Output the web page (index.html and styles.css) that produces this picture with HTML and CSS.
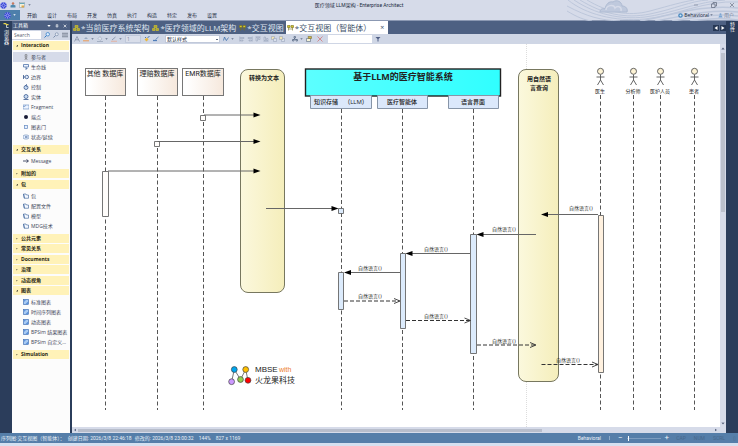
FILE: index.html
```html
<!DOCTYPE html>
<html lang="zh-CN">
<head>
<meta charset="utf-8">
<title>医疗领域 LLM架构 - Enterprise Architect</title>
<link rel="stylesheet" href="styles.css">
</head>
<body>
<svg class="defs" aria-hidden="true">
  <symbol id="logo" viewBox="0 0 12 12"><circle cx="6" cy="6" r="5.4" fill="#3b49d8"/><path d="M6 .6v10.800M.6 6h10.800M2.200 2.200l7.600 7.600M9.800 2.200l-7.600 7.600" stroke="#c9cffa" stroke-width=".9"/><circle cx="6" cy="6" r="1.600" fill="#3b49d8"/></symbol>
  <symbol id="folder" viewBox="0 0 12 12"><path d="M1 2h5l1 2h4v6.500H2.500z" fill="#f4f8ff" stroke="#456a9e" stroke-width="1.300"/><path d="M1 2l2 8.500" stroke="#456a9e" stroke-width="1.600"/></symbol>
  <symbol id="chart" viewBox="0 0 12 12"><rect x="1" y="1" width="10" height="10" fill="#5c93dc" stroke="#2f5fa5"/><path d="M2 6l4-4h4v3L5 10H2z" fill="#a9cbf3"/></symbol>
  <symbol id="seq" viewBox="0 0 14 12"><path d="M1 1h5v4H1zM8 1h5v4H8zM3 5v6M11 5v6M3 8h8" fill="#d6c72c" stroke="#77701f" stroke-width="1.200"/></symbol>
  <symbol id="cls" viewBox="0 0 14 12"><path d="M4 1h6v4H4zM1 7h5v4H1zM8 7h5v4H8z" fill="#a9a432" stroke="#d6c72c" stroke-width="1.200"/></symbol>
  <symbol id="align" viewBox="0 0 12 12"><path d="M1.500 1v10M3 3h7v2H3zM3 8h5v2H3z" fill="none" stroke="#8f9bb2"/></symbol>
  <symbol id="down" viewBox="0 0 6 4"><path d="M.5.500h5L3 3.500z" fill="currentColor"/></symbol>
</svg>

<header class="top">
  <svg class="swirl" viewBox="566 0 172 21" preserveAspectRatio="xMaxYMin slice" aria-hidden="true">
    <g fill="none" stroke="#bdc7db"><path d="M568 0C585 14 615 22 645 19S705 0 738 2M574 0C595 14 620 20 645 17S700 1 725 0M580 0C603 14 625 19 650 14S690 1 708 0M587 0C607 12 628 17 650 11S682 2 694 0M567 6C588 17 600 20 620 21M567 11C577 17 584 20 592 21"/><path d="M640 21C670 16 700 4 738 8M655 21C680 17 705 9 738 12M672 21C694 18 712 13 738 16M690 21C710 19 720 17 738 20" stroke-width="1.500"/></g>
    <path d="M600 12c0-3 3-4 5-3c1-5 4-8 8-7c4-3 9 0 9 4c4 0 6 3 5 6z" fill="#bfc9dd" stroke="#aebbd2"/><path d="M606 10c0-5 8-6 9-2c3-3 7-1 6 3" fill="none" stroke="#d6dbe9" stroke-width="1.500"/>
  </svg>
  <div class="titlebar">
    <div class="quick">
      <svg class="logo" viewBox="0 0 12 12"><use href="#logo"/></svg>
      <svg class="ic" viewBox="0 0 12 12"><circle cx="6" cy="3" r="2.500" fill="#c9795d"/><path d="M1 7l5-2 5 2v4H1z" fill="#4f8aae"/></svg>
      <svg class="ic" viewBox="0 0 12 12"><rect x="1" y="1" width="10" height="10" fill="#f3f1df" stroke="#8496a7"/><path d="M1 3h10" stroke="#67a7b9" stroke-width="2"/><path d="M5 7h5v4H5z" fill="#dda64b"/></svg>
      <svg class="caret" viewBox="0 0 6 4"><use href="#down"/></svg>
    </div>
    <h1>医疗领域 LLM架构 - Enterprise Architect</h1>
    <div class="winbtns">
      <button aria-label="最小化"><svg viewBox="0 0 12 12"><path d="M2 6h8" stroke="#5d6678"/></svg></button>
      <button aria-label="还原"><svg viewBox="0 0 12 12"><path d="M1 4h7v7H1zM4 4V1h7v7H8" fill="none" stroke="#5d6678" stroke-width="1.400"/></svg></button>
      <button aria-label="关闭"><svg viewBox="0 0 12 12"><path d="M2 2l8 8M10 2l-8 8" stroke="#5d6678" stroke-width="1.200"/></svg></button>
    </div>
  </div>
  <div class="menubar">
    <button class="file" aria-label="文件"><svg class="logo" viewBox="0 0 12 12"><use href="#logo"/></svg><svg class="caret" viewBox="0 0 6 4"><use href="#down"/></svg></button>
    <nav class="menu"><button>开始</button><button>设计</button><button>布局</button><button>开发</button><button>仿真</button><button>执行</button><button>构造</button><button>特定</button><button>发布</button><button>设置</button></nav>
    <div class="account">
      <button><svg class="ic5" viewBox="0 0 12 12"><circle cx="6" cy="6" r="4" fill="#cfe6f5" stroke="#4586bd" stroke-width="3"/></svg>Behavioral<svg class="caret" viewBox="0 0 6 4"><use href="#down"/></svg></button>
      <button class="muted"><svg class="ic5" viewBox="0 0 12 12"><circle cx="6" cy="3" r="2.500" fill="#7ba6d4"/><path d="M1 11l2-5h6l2 5z" fill="#7ba6d4"/></svg>用户</button>
    </div>
  </div>
</header>

<div class="work">
  <aside class="rail">
    <svg class="railicon" viewBox="0 0 12 12"><path d="M1 3h4l2 2h4" stroke="#e6d34b" stroke-width="2.500" fill="none"/><path d="M7 6v5h4" stroke="#e8edf6" fill="none" stroke-width="1.500"/></svg>
    <button>浏览器</button>
  </aside>
  <aside class="toolbox">
    <div class="boxhead"><h2>工具箱</h2>
      <button aria-label="选项"><svg viewBox="0 0 6 4"><use href="#down"/></svg></button>
      <button aria-label="固定"><svg viewBox="0 0 6 8"><path d="M1.500 1h3v3h-3zM0 4.500h6M3 4v4" fill="none" stroke="currentColor"/></svg></button>
      <button aria-label="关闭"><svg viewBox="0 0 6 6"><path d="M1 1l4 4M5 1L1 5" stroke="currentColor"/></svg></button>
    </div>
    <div class="search">
      <input type="text" placeholder="Search" aria-label="Search">
      <button aria-label="搜索"><svg viewBox="0 0 12 12"><circle cx="7.500" cy="4.500" r="3.500" fill="#dceeff" stroke="#2f78c4" stroke-width="1.400"/><path d="M5 7l-4 4" stroke="#2f78c4" stroke-width="2"/></svg></button>
      <button aria-label="查找工具"><svg viewBox="0 0 12 12"><circle cx="7.500" cy="4.500" r="3" fill="#e6ebf3" stroke="#778aa8" stroke-width="1.300"/><path d="M5 7l-4 4" stroke="#778aa8" stroke-width="2"/></svg></button>
      <button aria-label="菜单"><svg viewBox="0 0 12 12"><path d="M0 2.500h12M0 6h12M0 9.500h12" stroke="#7e8797" stroke-width="2"/></svg></button>
    </div>
    <div class="tree">
      <section class="group open"><h3><button>Interaction</button></h3><ul>
        <li class="on"><svg viewBox="0 0 12 12"><circle cx="6" cy="2.500" r="2" fill="none" stroke="#555"/><path d="M6 5v4M3 6h6M6 8l-2.500 4M6 8l2.500 4" stroke="#555" fill="none"/></svg><button>参与者</button></li>
        <li><svg viewBox="0 0 12 12"><path d="M1 1h10v5H1zM6 6v6M6 9h3" fill="#eef4ff" stroke="#3c64a0" stroke-width="1.400"/></svg><button>生命线</button></li>
        <li><svg viewBox="0 0 12 12"><path d="M1 2v8M1 6h3" stroke="#33548c" stroke-width="1.600"/><circle cx="7.500" cy="6" r="3.500" fill="#dfe9f8" stroke="#33548c" stroke-width="1.500"/></svg><button>边界</button></li>
        <li><svg viewBox="0 0 12 12"><circle cx="6" cy="7" r="4" fill="#c9dbf2" stroke="#33548c" stroke-width="1.500"/><path d="M8 0L5 3l3 2" stroke="#33548c" fill="none" stroke-width="1.300"/></svg><button>控制</button></li>
        <li><svg viewBox="0 0 12 12"><circle cx="6" cy="5" r="4" fill="#c9dbf2" stroke="#33548c" stroke-width="1.500"/><path d="M1 11h10" stroke="#33548c" stroke-width="1.600"/></svg><button>实体</button></li>
        <li><svg viewBox="0 0 12 12"><path d="M0 2h12v8H0zM0 5h4l1-3" fill="#edf4ff" stroke="#5f88c0" stroke-width="1.200"/></svg><button>Fragment</button></li>
        <li><svg viewBox="0 0 12 12"><circle cx="6" cy="6" r="4" fill="#171a35"/></svg><button>端点</button></li>
        <li><svg viewBox="0 0 12 12"><rect x="3" y="3" width="6" height="6" fill="#e6f0ff" stroke="#6b8fc4" stroke-width="1.500"/></svg><button>图表门</button></li>
        <li><svg viewBox="0 0 12 12"><rect x="0" y="2" width="12" height="8" rx="4" fill="#e6f0ff" stroke="#6686b4" stroke-width="1.200"/><path d="M4 6h5" stroke="#33548c" stroke-width="2"/></svg><button>状态/延续</button></li>
      </ul></section>
      <section class="group open"><h3><button>交互关系</button></h3><ul>
        <li><svg viewBox="0 0 12 12"><path d="M0 6h10M7 3l4 3-4 3" fill="none" stroke="#222b4a" stroke-width="1.600"/></svg><button>Message</button></li>
      </ul></section>
      <section class="group roomy"><h3><button>附加的</button></h3></section>
      <section class="group open"><h3><button>包</button></h3><ul>
        <li><svg viewBox="0 0 12 12"><use href="#folder"/></svg><button>包</button></li>
        <li><svg viewBox="0 0 12 12"><use href="#folder"/></svg><button>配置文件</button></li>
        <li><svg viewBox="0 0 12 12"><use href="#folder"/></svg><button>模型</button></li>
        <li><svg viewBox="0 0 12 12"><use href="#folder"/></svg><button>MDG技术</button></li>
      </ul></section>
      <section class="group"><h3><button>公共元素</button></h3></section>
      <section class="group roomy"><h3><button>常见关系</button></h3></section>
      <section class="group"><h3><button>Documents</button></h3></section>
      <section class="group roomy"><h3><button>治理</button></h3></section>
      <section class="group"><h3><button>动态视角</button></h3></section>
      <section class="group open"><h3><button>图表</button></h3><ul>
        <li><svg viewBox="0 0 12 12"><use href="#chart"/></svg><button>标准图表</button></li>
        <li><svg viewBox="0 0 12 12"><use href="#chart"/></svg><button>时间序列图表</button></li>
        <li><svg viewBox="0 0 12 12"><use href="#chart"/></svg><button>动态图表</button></li>
        <li><svg viewBox="0 0 12 12"><use href="#chart"/></svg><button>BPSim 结果图表</button></li>
        <li><svg viewBox="0 0 12 12"><use href="#chart"/></svg><button>BPSim 自定义...</button></li>
      </ul></section>
      <section class="group"><h3><button>Simulation</button></h3></section>
    </div>
  </aside>

  <main class="main">
    <div class="tabs">
      <button class="tab"><svg viewBox="0 0 14 12"><use href="#cls"/></svg>*当前医疗系统架构</button>
      <button class="tab"><svg viewBox="0 0 14 12"><use href="#cls"/></svg>*医疗领域的LLM架构</button>
      <button class="tab"><svg viewBox="0 0 14 12"><use href="#seq"/></svg>*交互视图</button>
      <button class="tab active"><svg viewBox="0 0 14 12"><use href="#seq"/></svg>*交互视图（智能体）<span class="x">×</span></button>
      <div class="tabnav"><button aria-label="上一个"><svg viewBox="0 0 6 6"><path d="M4.500 1v4L1.500 3z" fill="#fff"/></svg></button><button aria-label="下一个"><svg viewBox="0 0 6 6"><path d="M1.500 1v4l3-2z" fill="#fff"/></svg></button></div>
    </div>
    <div class="toolbar">
      <button aria-label="字体"><svg viewBox="0 0 12 12"><path d="M1 11L6 1l5 10M3 7.500h6" fill="none" stroke="#7f8ba0" stroke-width="1.400"/></svg></button>
      <button class="drop" aria-label="填充颜色"><svg viewBox="0 0 12 12"><path d="M2 6l4-4 4 4z" fill="#9aa9c2"/><path d="M0 9.500h12" stroke="#e7a774" stroke-width="2.500"/></svg><svg class="caret" viewBox="0 0 6 4"><use href="#down"/></svg></button>
      <button class="drop" aria-label="字体颜色"><svg viewBox="0 0 12 12"><path d="M2 5l4-4 4 5-4 3z" fill="#dfe4ee" stroke="#8e9bb3"/><path d="M0 11h12" stroke="#a4afc2" stroke-width="2"/></svg><svg class="caret" viewBox="0 0 6 4"><use href="#down"/></svg></button>
      <button class="drop" aria-label="线条颜色"><svg viewBox="0 0 12 12"><path d="M2 8l7-6" stroke="#8e9bb3" stroke-width="2"/><path d="M0 10.500h12" stroke="#e3b3a3" stroke-width="2"/></svg><svg class="caret" viewBox="0 0 6 4"><use href="#down"/></svg></button>
      <input class="num" type="text" value="1" aria-label="线宽">
      <button aria-label="格式刷"><svg viewBox="0 0 12 12"><path d="M1 7l5-4 3 4-4 4z" fill="#eab83e"/><path d="M7 4l4-4M2 2l2 2" stroke="#4976ad" stroke-width="2"/></svg></button>
      <button aria-label="应用格式"><svg viewBox="0 0 12 12"><path d="M5 7l6-5" stroke="#6d91bf" stroke-width="2"/><path d="M0 9h8" stroke="#4f7db8" stroke-width="2.500"/></svg></button>
      <select class="style" aria-label="样式"><option>默认样式</option></select>
      <button class="drop pen" aria-label="画笔"><svg viewBox="0 0 12 12"><path d="M1 9l2-7 3 6M6 10l5-7" fill="none" stroke="#3a6dab" stroke-width="1.500"/></svg><svg class="caret" viewBox="0 0 6 4"><use href="#down"/></svg></button>
      <span class="aligns">
        <button aria-label="左对齐"><svg viewBox="0 0 12 12"><use href="#align"/></svg></button>
        <button aria-label="右对齐"><svg viewBox="0 0 12 12"><path d="M10.500 1v10M2 3h7v2H2zM4 8h5v2H4z" fill="none" stroke="#8f9bb2"/></svg></button>
        <button aria-label="顶对齐"><svg viewBox="0 0 12 12"><path d="M1 1.500h10M2 3h3v7H2zM7 3h3v4H7z" fill="none" stroke="#8f9bb2"/></svg></button>
        <button aria-label="底对齐"><svg viewBox="0 0 12 12"><path d="M1 10.500h10M2 2h3v7H2zM7 5h3v4H7z" fill="none" stroke="#8f9bb2"/></svg></button>
        <button aria-label="置前"><svg viewBox="0 0 12 12"><path d="M1 1h6v6H1z" fill="#f2e6b2" stroke="#8f9bb2"/><path d="M5 5h6v6H5z" fill="#d9e0ec" stroke="#8f9bb2"/></svg></button>
        <button aria-label="置后"><svg viewBox="0 0 12 12"><path d="M5 5h6v6H5z" fill="#d9e0ec" stroke="#8f9bb2"/><path d="M1 1h6v6H1z" fill="#f2e6b2" stroke="#8f9bb2"/></svg></button>
      </span>
      <button class="drop" aria-label="布局"><svg viewBox="0 0 12 12"><path d="M4 1h3v3H4zM1 7h3v3H1zM8 7h3v3H8zM5 4v3h4M3 7l2-2" fill="none" stroke="#4c5c79" stroke-width="1.300"/></svg><svg class="caret" viewBox="0 0 6 4"><use href="#down"/></svg></button>
      <button aria-label="属性"><svg viewBox="0 0 12 12"><path d="M1 5h8v6H1z" fill="#f4f3da" stroke="#3f506d"/><path d="M4 1h7v4H5z" fill="#d6b73d" stroke="#6c6430"/></svg></button>
      <button class="del" aria-label="删除"><svg viewBox="0 0 12 12"><path d="M1 1l10 10M11 1L1 11" stroke="#d27172" stroke-width="1.500"/></svg></button>
      <input class="filter" type="text" aria-label="过滤">
      <button aria-label="应用过滤"><svg viewBox="0 0 12 12"><path d="M1 2h10L7 6v5H5V6z" fill="#4d5c83"/></svg></button>
    </div>
    <div class="view">
      <div class="canvas">
        <svg class="diagram" width="648" height="383" viewBox="72 44 648 383" role="img" aria-label="交互视图（智能体）">
          <defs>
            <linearGradient id="gy"><stop offset="0" stop-color="#fbf8dd"/><stop offset="1" stop-color="#f5eebb"/></linearGradient>
            <linearGradient id="gp"><stop offset=".1" stop-color="#fff"/><stop offset="1" stop-color="#f6e8dc"/></linearGradient>
            <linearGradient id="gc"><stop offset="0" stop-color="#5cffff"/><stop offset="1" stop-color="#30ffff"/></linearGradient>
            <g id="actor" fill="none" stroke="#555" stroke-width=".9"><path d="M0 74.500V80M-4 77H4M0 80l-3 5M0 80l3 5"/><circle cx="0" cy="71.300" r="3" fill="#fdf3d5"/></g>
            <path id="solid" d="M0 0l-7-2.500v5z" fill="#000"/>
            <path id="open" d="M-6-2.500L0 0l-6 2.500" fill="none" stroke="#333" stroke-width=".9"/>
          </defs>
          <path class="page" d="M526.500 44v383"/>
          <path class="life" d="M105.500 96v314M157.500 96v314M203.500 96v314M341.500 109v301M402.500 109v301M473.500 109v301M600.500 95v315M633.500 95v315M660.500 95v315M694.500 95v315"/>
          <g stroke="#777" fill="url(#gp)"><rect x="85.500" y="68.500" width="40" height="27"/><rect x="137.500" y="68.500" width="40" height="27"/><rect x="182.500" y="68.500" width="41" height="27"/></g>
          <g stroke="#77775f" fill="url(#gy)"><rect x="240.500" y="69.500" width="44" height="223" rx="7.500"/><rect x="518.500" y="69.500" width="40" height="312" rx="7.500"/></g>
          <rect x="305.500" y="69" width="195" height="27" fill="url(#gc)" stroke="#222" stroke-width="1.400"/>
          <path d="M310.500 95.500h61v13h-61zM377.500 95.500h50v13h-50zM448.500 95.500h50v13h-50z" fill="#dbe8fb" stroke="#8795a8"/>
          <g stroke="#666" stroke-width=".9"><path d="M200.500 115.500h5v5h-5zM154.500 141.500h5v5h-5zM102.500 171.500h6v45h-6z" fill="#fffdfb"/><path d="M338.500 208.500h5v5h-5zM338.500 272.500h5v37h-5zM400.500 253.500h5v75h-5zM470.500 234.500h6v119h-6z" fill="#dcebfc"/><path d="M598.500 215.500h5v157h-5z" fill="#fff1df"/></g>
          <path class="msg" d="M204 115h50M158 141.500h96M108 171h146M266 208.500h67M598 214.500h-52M536 234.500h-54M470 253.500h-59M400 272.500h-51"/>
          <use href="#solid" x="260.500" y="115"/><use href="#solid" x="260.500" y="141.500"/><use href="#solid" x="260.500" y="171"/><use href="#solid" x="338.500" y="208.500"/>
          <g transform="scale(-1 1)"><use href="#solid" x="-541" y="214.500"/><use href="#solid" x="-476.500" y="234.500"/><use href="#solid" x="-405.500" y="253.500"/><use href="#solid" x="-344" y="272.500"/></g>
          <path class="reply" d="M344 301h55M406 320.500h64M477 345h59M541.500 364.500h56"/>
          <use href="#open" x="400" y="301"/><use href="#open" x="470.500" y="320.500"/><use href="#open" x="536" y="345"/><use href="#open" x="598" y="364.500"/>
          <use href="#actor" x="600.500"/><use href="#actor" x="633.500"/><use href="#actor" x="660.500"/><use href="#actor" x="694.500"/>
          <g class="db"><text x="105" y="76">其他 数据库</text><text x="157" y="76">理赔数据库</text><text x="203" y="76">EMR数据库</text></g>
          <g class="strong"><text x="264" y="80">转换为文本</text><text x="539" y="81">用自然语</text><text x="539" y="90">言查询</text></g>
          <text class="system" x="403" y="80">基于LLM的医疗智能系统</text>
          <g class="part"><text x="326" y="104">知识存储</text><text x="356" y="104">（LLM）</text><text x="402" y="104">医疗智能体</text><text x="473" y="104">语言界面</text></g>
          <g class="small"><text x="600" y="93">医生</text><text x="633" y="93">分析师</text><text x="660" y="93">医护人员</text><text x="694" y="93">患者</text>
          <text x="581" y="210">自然语言()</text><text x="504" y="231">自然语言()</text><text x="436" y="251">自然语言()</text><text x="370" y="270">自然语言()</text><text x="370" y="298">自然语言()</text><text x="436" y="318">自然语言()</text><text x="504" y="343">自然语言()</text><text x="568" y="362">自然语言()</text></g>
          <path d="M234.300 369.500l-2.700 12.200M234.300 369.500l6.200 10 5.200-10 2.300 11" fill="none" stroke="#555" stroke-width=".8"/>
          <g stroke="#444" stroke-width=".7"><circle cx="234.300" cy="369.500" r="2.900" fill="#00a6ef"/><circle cx="245.700" cy="369.500" r="2.900" fill="#ffc000"/><circle cx="231.600" cy="381.700" r="2.900" fill="#cc99ff"/><circle cx="240.500" cy="379.500" r="2.900" fill="#92d050"/><circle cx="248" cy="380.300" r="2.900" fill="#fe0000"/></g>
          <g class="brand"><text x="255" y="372">MBSE</text><text class="with" x="279" y="372">with</text><text x="255" y="383">火龙果科技</text></g>
        </svg>
      </div>
      <div class="vbar"><svg viewBox="0 0 6 4"><path d="M.5 3.500h5L3 .5z" fill="#56617a"/></svg><span class="thumb"></span><i></i><svg viewBox="0 0 6 4"><use href="#down"/></svg></div>
    </div>
    <div class="hbar"><svg viewBox="0 0 6 6"><path d="M4.500 1v4L1.500 3z" fill="#56617a"/></svg><span class="thumb"></span><i></i><svg viewBox="0 0 6 6"><path d="M1.500 1v4l3-2z" fill="#56617a"/></svg></div>
  </main>
  <aside class="rail right"><button>特性</button></aside>
</div>

<footer class="status">
  <span>序列图:交互视图（智能体）：</span><span>创建日期: 2026/3/8 22:46:18</span><span>修改的: 2026/3/8 23:00:32</span><span class="wide">144%</span><span class="wide">827 x 1169</span>
  <div class="zoom"><span>Behavioral</span><span class="sep"></span><button aria-label="缩小">−</button><input type="range" min="0" max="100" value="3" aria-label="缩放"><button aria-label="放大">+</button></div>
  <div class="keys"><span>CAP</span><span>NUM</span><span>SCRL</span><span>▯</span></div>
</footer>
<div class="edge"></div>
</body>
</html>
```
FILE: styles.css
```css
* { box-sizing: border-box; }
html, body { height: 100%; }
body {
  margin: 0; display: flex; flex-direction: column; overflow: hidden;
  background: #d6dbe9; color: #20293c;
  font: 5px/10px "Open Sans", "Noto Sans CJK SC", sans-serif;
}
h1, h2, h3, ul { margin: 0; padding: 0; font: inherit; list-style: none; }
button, input, select { font: inherit; color: inherit; border: 0; margin: 0; padding: 0; background: none; border-radius: 0; white-space: nowrap; }
svg { display: block; flex: none; }
.defs { position: absolute; width: 0; height: 0; }
.caret { width: 3px; height: 2px; color: #67728a; }
.logo { width: 7px; height: 7px; }
.ic { width: 6px; height: 6px; }
.ic5 { width: 5px; height: 5px; }

.top { position: relative; flex: none; border-bottom: 1px solid #8b98b2; }
.swirl { position: absolute; right: 0; top: 0; width: 172px; height: 21px; }
.titlebar { position: relative; display: grid; grid-template-columns: 40px 1fr 60px; align-items: center; height: 10px; }
.titlebar h1 { text-align: center; font-family: Roboto, "Noto Sans CJK SC", sans-serif; }
.quick { display: flex; align-items: center; gap: 3px; }
.winbtns { display: flex; justify-content: flex-end; gap: 12px; padding-right: 3px; }
.winbtns svg { width: 6px; height: 6px; }
.menubar { position: relative; display: flex; height: 10px; }
.file { display: flex; align-items: center; justify-content: center; gap: 2px; width: 20px; background: #4d7fab; }
.file .caret { color: #fff; }
.menu { display: flex; padding-left: 2px; }
.menu button { width: 20px; }
.account { display: flex; gap: 5px; margin-left: auto; padding-right: 4px; }
.account button { display: flex; align-items: center; gap: 1px; }
.muted { color: #7c879c; }

.work { flex: 1; min-height: 0; display: flex; background: #2b3d5b; }
.rail { width: 12px; flex: none; display: flex; flex-direction: column; align-items: center; padding-top: 1px; gap: 2px; color: #fff; background: #2b3d5b; }
.rail button { writing-mode: vertical-rl; line-height: 6px; }
.railicon { width: 6px; height: 6px; }

.toolbox { width: 58px; flex: none; display: flex; flex-direction: column; background: #fcfcfc; }
.boxhead { display: flex; align-items: center; gap: 4px; height: 9px; padding: 0 3px 0 1px; background: #4d6082; color: #fff; }
.boxhead h2 { flex: 1; line-height: 9px; }
.boxhead svg { width: 4px; height: 4px; }
.search { display: flex; align-items: center; gap: 3px; height: 10px; padding: 1px 2px 1px 0; background: #cfd6e5; }
.search input { flex: 1; min-width: 0; height: 8px; padding-left: 2px; background: #fff; }
.search input::placeholder { color: #555e6e; opacity: 1; }
.search svg { width: 6px; height: 6px; }
.tree { padding: 1px 1px 0; overflow: hidden; }
.group { margin-bottom: 1px; }
.group.roomy { margin-bottom: 2px; }
.group.open { margin-bottom: 0; }
.group h3 { display: flex; align-items: center; height: 9px; padding-left: 3px; gap: 3px; background: #fff2b8; font-weight: 700; line-height: 9px; color: #262411; }
.group h3::before { content: ""; width: 2px; height: 2px; background: #9b9472; clip-path: polygon(0 0, 100% 50%, 0 100%); }
.group.open h3::before { background: #4d4938; clip-path: polygon(100% 0, 100% 100%, 0 100%); }
.group ul { padding: 2px 0 3px; }
.group li { display: flex; align-items: center; gap: 2px; height: 10px; padding-left: 10px; color: #3c4658; }
.group li svg { width: 6px; height: 6px; }
.group li.on { background: #d6dbe9; }

.main { flex: 1; min-width: 0; margin-left: 2px; display: flex; flex-direction: column; background: #d6dbe9; }
.tabs { display: flex; height: 13px; flex: none; background: #4d6082; color: #dfe5f0; font-size: 8px; line-height: 12px; }
.tab { display: flex; align-items: center; padding: 0 2px 0 1px; gap: 1px; }
.tab svg { width: 7px; height: 6px; }
.tab.active { background: #fff; color: #3c5069; padding: 0 4px 0 1px; }
.tab .x { margin-left: 8px; font-size: 7px; }
.tabnav { display: flex; align-items: center; gap: 1px; margin-left: auto; }
.tabnav button { width: 6px; height: 6px; background: #263754; }
.tabnav svg { width: 6px; height: 6px; }
.toolbar { display: flex; align-items: center; gap: 3px; height: 10px; flex: none; padding-left: 2px; background: #cfd6e5; }
.toolbar svg { width: 6px; height: 6px; }
.toolbar .caret { width: 3px; height: 2px; }
.toolbar .drop { display: flex; align-items: center; gap: 2px; }
.toolbar input, .toolbar select { height: 8px; line-height: 8px; }
.num { width: 16px; padding-left: 1px; background: #d9deea; border: 1px solid #bfc8da; color: #7c879c; }
.style { appearance: none; width: 55px; margin-left: 3px; padding-left: 1px; background: linear-gradient(#5c6880, #5c6880) 50px 3px / 2px 1px no-repeat #fff; border: 1px solid #c1c9da; line-height: 6px !important; }
.pen { margin-right: 2px; }
.aligns { display: flex; gap: 2px; margin-right: 4px; }
.del { margin: 0 2px; }
.filter { width: 44px; background: #fff; }

.view { flex: 1; min-height: 0; display: flex; }
.canvas { flex: 1; min-width: 0; overflow: hidden; background: #fff; }
.vbar { width: 6px; flex: none; display: flex; flex-direction: column; align-items: center; gap: 3px; padding: 3px 0 2px; background: #d6dbe9; color: #56617a; }
.vbar svg { width: 4px; height: 3px; }
.vbar .thumb { width: 4px; height: 42%; background: #bcc1cd; }
.vbar i, .hbar i { flex: 1; }
.hbar { height: 6px; flex: none; display: flex; align-items: center; gap: 1px; padding: 0 8px 0 1px; background: #d6dbe9; }
.hbar svg { width: 4px; height: 4px; }
.hbar .thumb { height: 3px; width: 72%; background: #b7bdcb; }

.life { fill: none; stroke: #555; stroke-width: 1; stroke-dasharray: 4 2.5; }
.page { stroke: #ddd; stroke-dasharray: 1 1; }
.msg { fill: none; stroke: #666; stroke-width: 1; }
.reply { fill: none; stroke: #333; stroke-width: 1; stroke-dasharray: 4 2; }
.diagram text { fill: #222; text-anchor: middle; }
.db { font-family: Roboto, "Noto Sans CJK SC", sans-serif; font-size: 7px; }
.strong { font-size: 6px; font-weight: 700; }
.part { font-size: 6px; font-weight: 500; }
.system { font-size: 9px; font-weight: 700; }
.small { font-family: "DejaVu Sans", "Noto Sans CJK SC", sans-serif; font-size: 5px; }
.diagram .brand text { font: 8px "Liberation Sans", "Noto Sans CJK SC", sans-serif; text-anchor: start; }
.diagram .brand .with { font-size: 7px; fill: #ed7d31; }

.status { display: flex; flex: none; gap: 3px; height: 10px; padding: 0 2px 0 1px; background: #557ea9; color: #eaf1f8; white-space: pre; font-family: Roboto, "Noto Sans CJK SC", sans-serif; }
.status .wide { margin-left: 2px; }
.zoom { display: flex; align-items: center; gap: 4px; margin-left: auto; }
.zoom button { font-size: 8px; line-height: 8px; }
.zoom .sep { width: 1px; height: 4px; margin: 0 4px; background: #8ba9c8; }
.zoom input { appearance: none; width: 34px; height: 6px; background: linear-gradient(#7c9cbf, #7c9cbf) 0 3px / 100% 1px no-repeat; }
.zoom input::-webkit-slider-thumb { appearance: none; width: 1px; height: 5px; background: #fff; }
.keys { display: flex; gap: 8px; padding-left: 4px; color: #48688c; }
.edge { height: 3px; flex: none; background: #d5e0f0; }
```
